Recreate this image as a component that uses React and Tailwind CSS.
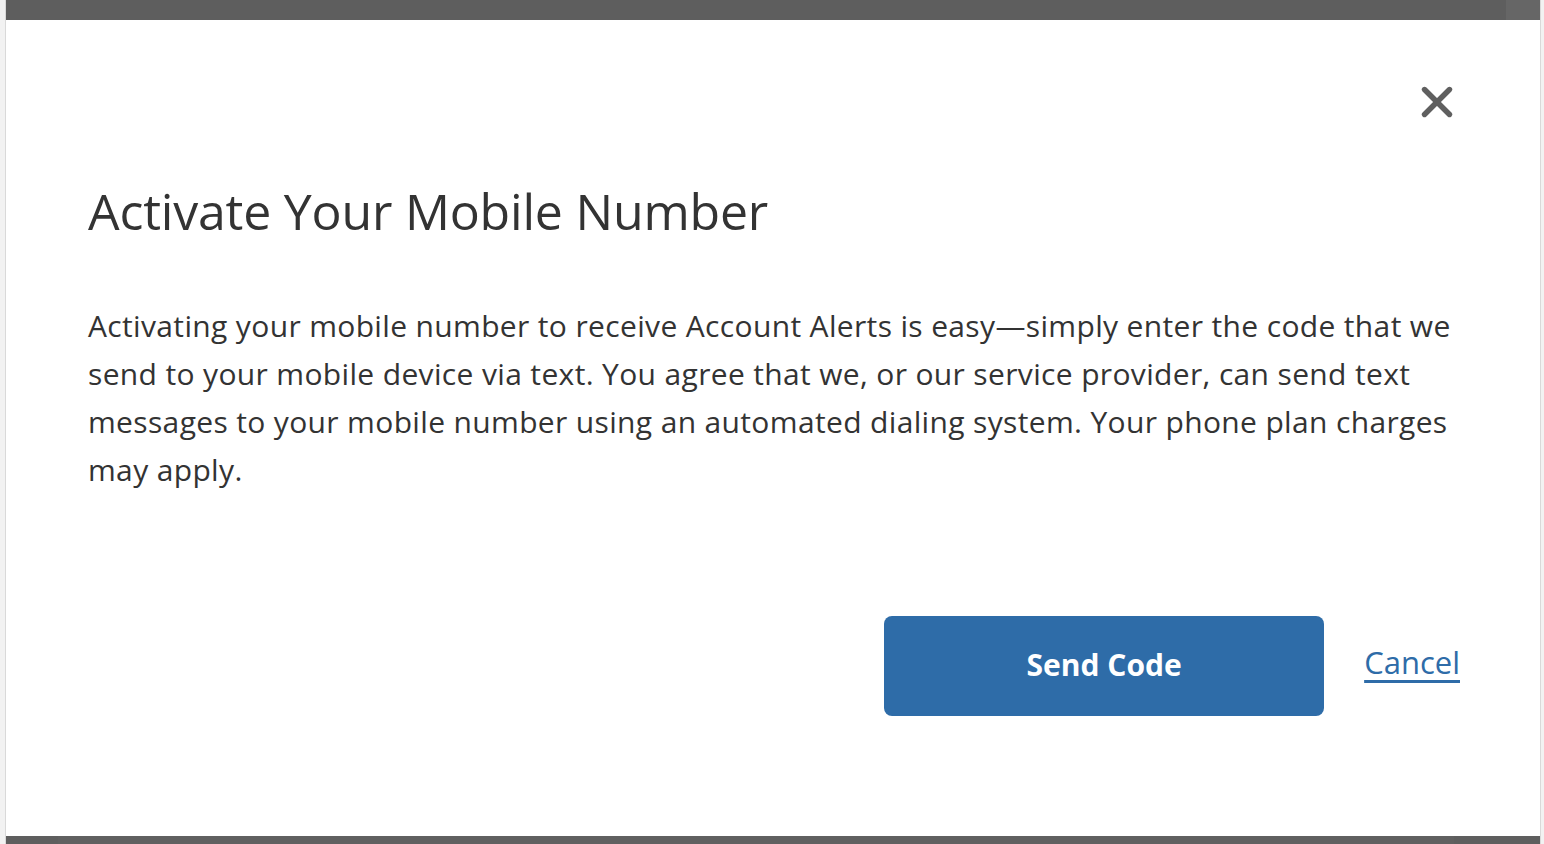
import { X } from "lucide-react";

const App = () => {
  return (
    <div className="w-[1544px] h-[844px] flex bg-[#f2f2f2] overflow-hidden" style={{ fontFamily: "'Open Sans', Lato, sans-serif" }}>
      <div className="w-[5px] shrink-0 bg-[#f2f2f2]"></div>
      <div className="w-px shrink-0 bg-[#d9d9d9]"></div>
      <div className="flex flex-col w-[1534px] shrink-0">
        <div className="h-[20px] flex shrink-0">
          <div className="flex-1 bg-[#5e5e5e]"></div>
          <div className="w-[34px] bg-[#666666]"></div>
        </div>
        <div className="flex-1 bg-white flex flex-col px-[82px] pt-[66px] relative">
          <button className="absolute right-[78px] top-[57px] text-[#5f5f5f]">
            <X size={50} strokeWidth={2.6} />
          </button>
          <h2 className="text-[50px] leading-none text-[#333333] mt-[100px] tracking-[-0.2px]">Activate Your Mobile Number</h2>
          <p className="text-[30px] leading-[48px] text-[#333333] mt-[66px] -mr-[4px] tracking-[0.35px]">
            Activating your mobile number to receive Account Alerts is easy—simply enter the code that we send to your mobile device via text. You agree that we, or our service provider, can send text messages to your mobile number using an automated dialing system. Your phone plan charges may apply.
          </p>
          <div className="flex items-center justify-end mt-[122px] -mr-[2px]">
            <button className="w-[440px] h-[100px] rounded-[8px] bg-[#2e6ca8] text-white text-[30px] font-bold pb-[3px]">Send Code</button>
            <a className="ml-[40px] -mt-[8px] text-[31px] text-[#2e6ca8] underline underline-offset-[6px]">Cancel</a>
          </div>
        </div>
        <div className="h-[8px] flex shrink-0">
          <div className="w-[52px] bg-[#5e5e5e]"></div>
          <div className="flex-1 bg-[#606060]"></div>
          <div className="w-[86px] bg-[#5e5e5e]"></div>
        </div>
      </div>
      <div className="w-px shrink-0 bg-[#d9d9d9]"></div>
      <div className="flex-1 bg-[#f2f2f2]"></div>
    </div>
  );
};

export default App;
